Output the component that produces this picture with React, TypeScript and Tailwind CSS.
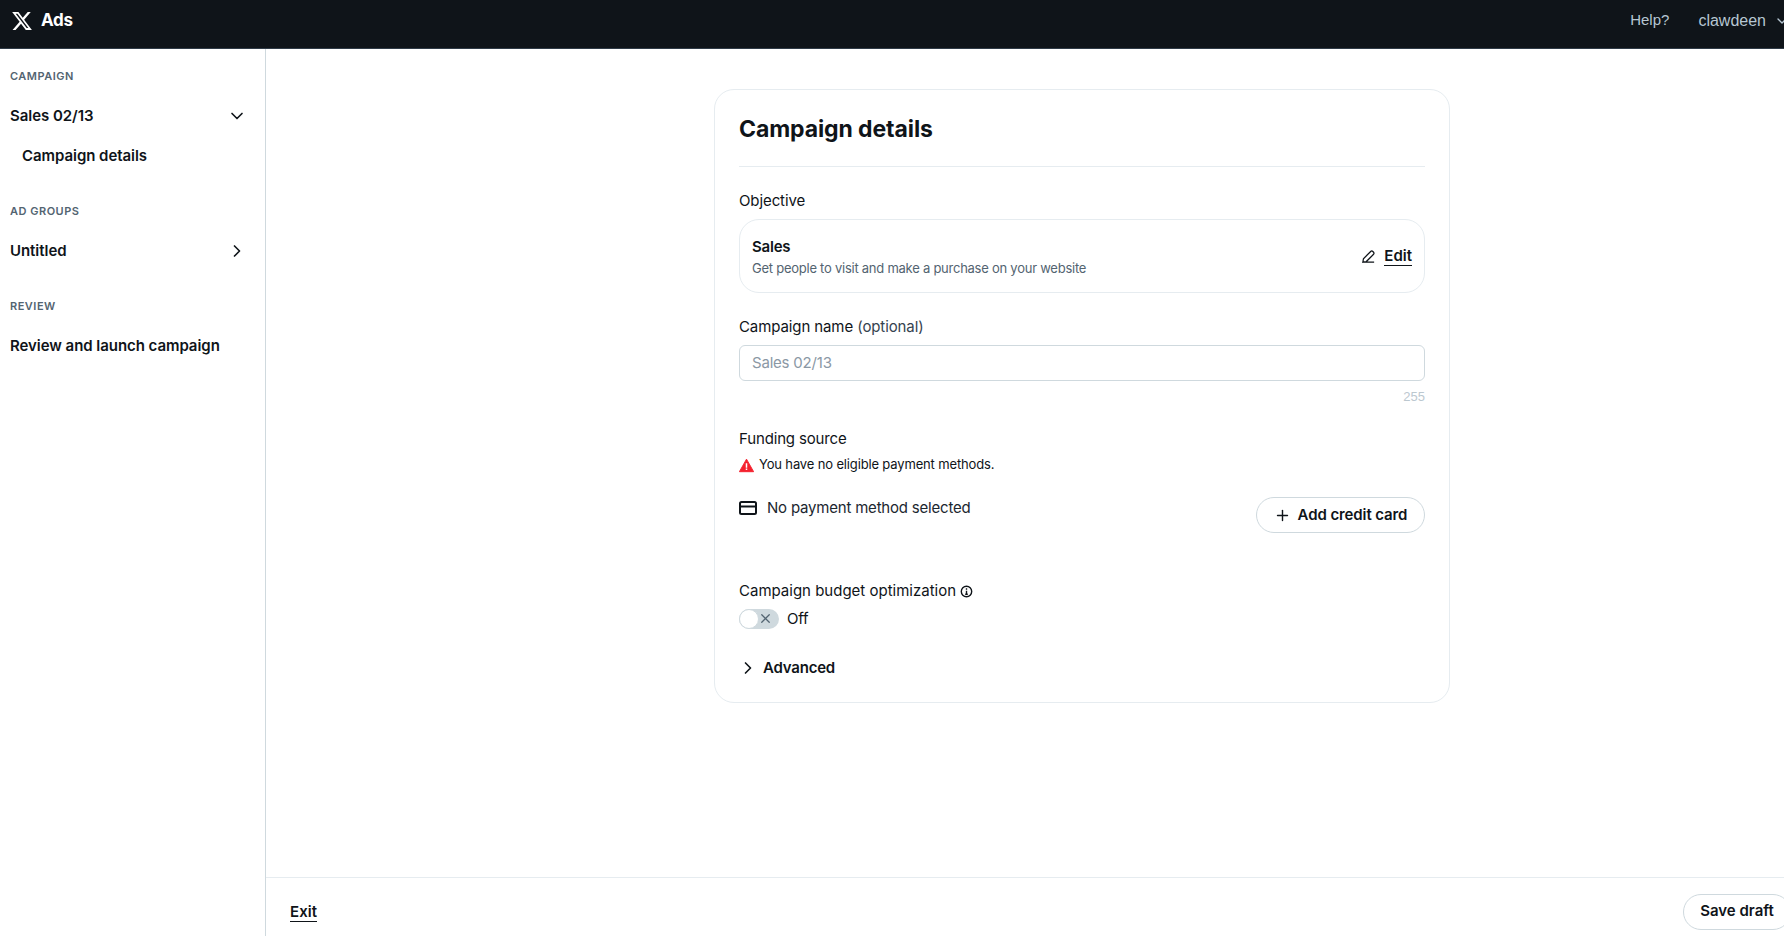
import { ChevronDown, ChevronRight, Plus, X } from "lucide-react";

const font = "font-['Inter','Noto_Sans',sans-serif]";

function SectionLabel({ children }: { children: string }) {
  return <div className="text-[11px] leading-[14px] font-semibold tracking-[0.5px] text-[#536471]">{children}</div>;
}

function NavRow({ label, open }: { label: string; open?: boolean }) {
  return (
    <div className="flex h-5 items-center justify-between pr-[18px] text-[15px] font-semibold tracking-[-0.05px] text-[#0f1419]">
      <span>{label}</span>
      {open === undefined ? null : open ? (
        <ChevronDown size={20} strokeWidth={2} />
      ) : (
        <ChevronRight size={20} strokeWidth={2} />
      )}
    </div>
  );
}

function Sidebar() {
  return (
    <aside className="w-[266px] shrink-0 border-r border-[#cfd9de] pl-[10px] pt-[20px]">
      <SectionLabel>CAMPAIGN</SectionLabel>
      <div className="mt-[23px]">
        <NavRow label="Sales 02/13" open />
      </div>
      <div className="mt-[20px] pl-[12px] text-[15px] leading-5 font-semibold tracking-[-0.05px] text-[#0f1419]">
        Campaign details
      </div>
      <div className="mt-[38px]">
        <SectionLabel>AD GROUPS</SectionLabel>
      </div>
      <div className="mt-[23px]">
        <NavRow label="Untitled" open={false} />
      </div>
      <div className="mt-[38px]">
        <SectionLabel>REVIEW</SectionLabel>
      </div>
      <div className="mt-[23px]">
        <NavRow label="Review and launch campaign" />
      </div>
    </aside>
  );
}

function CampaignCard() {
  return (
    <section className="h-[614px] w-[736px] rounded-[20px] border border-[#e6ecf0] px-[24px] text-[#0f1419]">
      <h1 className="mt-[25px] text-[23px] leading-[28px] font-bold tracking-[-0.1px]">Campaign details</h1>
      <div className="mt-[23px] h-px bg-[#e6ecf0]" />

      <div className="mt-[24px] text-[15px] leading-5 tracking-[-0.1px]">Objective</div>
      <div className="mt-[8px] flex h-[74px] items-center justify-between rounded-[20px] border border-[#e6ecf0] pl-[12px] pr-[12px]">
        <div>
          <div className="text-[15px] leading-5 font-semibold tracking-[-0.2px]">Sales</div>
          <div className="mt-[3px] text-[13px] leading-4 tracking-[-0.25px] text-[#536471]">
            Get people to visit and make a purchase on your website
          </div>
        </div>
        <div className="flex items-center gap-[8px]">
          <svg viewBox="0 0 24 24" className="size-[15px]" fill="none" stroke="#0f1419" strokeWidth="2">
            <path d="M3 21l.9-5.5L15.5 3.9a2.4 2.4 0 0 1 3.4 0l1.2 1.2a2.4 2.4 0 0 1 0 3.4L8.5 20.1 3 21zM3 21h18" />
          </svg>
          <span className="border-b border-[#0f1419] text-[15px] leading-[19px] font-semibold tracking-[0px]">Edit</span>
        </div>
      </div>

      <div className="mt-[24px] text-[15px] leading-5 tracking-[-0.1px]">
        Campaign name <span className="text-[#36434f]">(optional)</span>
      </div>
      <div className="mt-[8px] flex h-[36px] items-center rounded-[6px] border border-[#cfd9de] pl-[12px] text-[15px] tracking-[-0.2px] text-[#8b98a5]">
        Sales 02/13
      </div>
      <div className="mt-[8px] text-right font-['Liberation_Sans',sans-serif] text-[13px] leading-[15px] text-[#bcc8d0]">255</div>

      <div className="mt-[25px] text-[15px] leading-5 tracking-[-0.15px]">Funding source</div>
      <div className="mt-[6px] flex h-[20px] items-center gap-[5px] text-[13px] tracking-[-0.15px]">
        <svg viewBox="0 0 16 16" className="size-[15px]">
          <path d="M8 1.2 15.6 14.6H.4z" fill="#f4212e" stroke="#f4212e" strokeLinejoin="round" />
          <path d="M7.2 5.5h1.6v4.8H7.2zM7.2 11.3h1.6v1.6H7.2z" fill="#fff" />
        </svg>
        You have no eligible payment methods.
      </div>

      <div className="mt-[22px] flex items-start justify-between">
        <div className="mt-[1px] flex items-center gap-[10px] text-[15px] leading-5 tracking-[-0.2px] text-[#1c2730]">
          <svg viewBox="0 0 18 14" className="h-[14px] w-[18px]" fill="none" stroke="#0f1419" strokeWidth="2">
            <rect x="1" y="1" width="16" height="12" rx="1.5" />
            <path d="M1 5.5h16" />
          </svg>
          No payment method selected
        </div>
        <button className="flex h-[36px] w-[169px] items-center justify-center gap-[7px] rounded-full border border-[#cfd9de] text-[15px] font-semibold tracking-[-0.1px]">
          <Plus size={17} strokeWidth={2} />
          Add credit card
        </button>
      </div>

      <div className="mt-[48px] flex h-5 items-center gap-[4px] text-[15px] tracking-[0px]">
        Campaign budget optimization
        <svg viewBox="0 0 14 14" className="size-[13px]" fill="none" stroke="#0f1419" strokeWidth="1.5">
          <circle cx="7" cy="7" r="5.6" />
          <path d="M7 6.2v3.8M5.6 10h2.8M7 3.6v1.4" />
        </svg>
      </div>
      <div className="mt-[8px] flex h-5 items-center gap-[8px] text-[15px] tracking-[-0.2px]">
        <div className="relative h-[20px] w-[40px] rounded-full bg-[#cfd9de]">
          <div className="absolute left-0 top-0 size-[20px] rounded-full border border-[#cfd9de] bg-white" />
          <X size={15} strokeWidth={2} className="absolute right-[6px] top-[2px] text-[#536471]" />
        </div>
        Off
      </div>

      <div className="mt-[29px] -ml-[1px] flex h-5 items-center gap-[5px] text-[15px] font-semibold tracking-[-0.2px]">
        <ChevronRight size={20} strokeWidth={2} />
        Advanced
      </div>
    </section>
  );
}

export default function App() {
  return (
    <div className={`${font} flex h-[936px] w-[1784px] flex-col overflow-hidden bg-white`}>
      <header className="flex h-[49px] shrink-0 items-center justify-between border-b border-[#2f3b47] bg-[#0f1419] pb-[7px] pl-[11px]">
        <div className="flex items-center gap-[8px]">
          <svg viewBox="0 0 24 24" className="size-[22px]" fill="#fff">
            <path d="M18.244 2.25h3.308l-7.227 8.26 8.502 11.24H16.17l-5.214-6.817L4.99 21.75H1.68l7.73-8.835L1.254 2.25H8.08l4.713 6.231zm-1.161 17.52h1.833L7.084 4.126H5.117z" />
          </svg>
          <span className="text-[17px] font-bold tracking-[-0.2px] text-white">Ads</span>
        </div>
        <div className="-mr-[6px] flex items-center font-['Liberation_Sans',sans-serif] text-[15px] text-[#b6c6d2]">
          <span>Help?</span>
          <span className="ml-[29px] text-[16px]">clawdeen</span>
          <ChevronDown size={16} strokeWidth={2} className="ml-[8px]" />
        </div>
      </header>
      <div className="flex min-h-0 flex-1">
        <Sidebar />
        <main className="flex min-w-0 flex-1 flex-col">
          <div className="flex-1 pl-[448px] pt-[40px]">
            <CampaignCard />
          </div>
          <footer className="-mr-[7px] flex h-[59px] shrink-0 items-center justify-between border-t border-[#e6ecf0] pl-[24px] pt-[9px]">
            <span className="border-b border-[#0f1419] text-[15px] leading-[19px] font-semibold tracking-[0.1px] text-[#0f1419]">Exit</span>
            <button className="h-[36px] w-[108px] rounded-full border border-[#cfd9de] text-[15px] font-semibold tracking-[0px] text-[#0f1419]">
              Save draft
            </button>
          </footer>
        </main>
      </div>
    </div>
  );
}
